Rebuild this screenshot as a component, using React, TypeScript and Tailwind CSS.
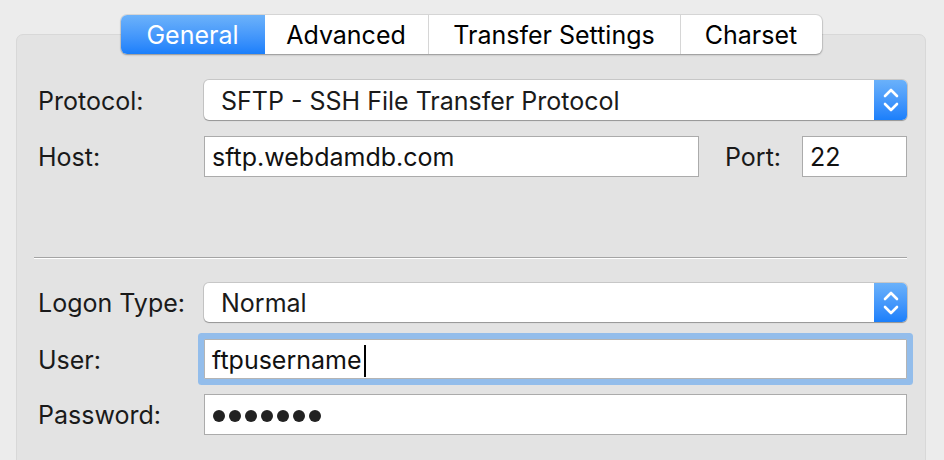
import React from "react";

const font = { fontFamily: "Inter, 'Liberation Sans', sans-serif" };

function Stepper() {
  return (
    <div className="flex h-full w-[33px] flex-col items-center justify-center rounded-r-[5px] bg-gradient-to-b from-[#6ab1fa] to-[#1a7ffb]">
      <svg width="20" height="28" viewBox="0 0 20 28" fill="none">
        <path d="M4 10 L10 4 L16 10" stroke="white" strokeWidth="2.6" strokeLinecap="round" strokeLinejoin="round" />
        <path d="M4 18 L10 24 L16 18" stroke="white" strokeWidth="2.6" strokeLinecap="round" strokeLinejoin="round" />
      </svg>
    </div>
  );
}

function Select({ value }: { value: string }) {
  return (
    <div className="flex h-full flex-1 items-stretch rounded-[5px] bg-white shadow-[0_0_0_1px_rgba(0,0,0,0.12),0_1px_1px_rgba(0,0,0,0.25)]">
      <div className="flex flex-1 items-center pl-[17px] pt-[3px] text-[25px] text-[#1a1a1a]">{value}</div>
      <Stepper />
    </div>
  );
}

function Label({ children }: { children: React.ReactNode }) {
  return <div className="w-[166px] shrink-0 pt-[3px] text-[25px] text-[#1a1a1a]">{children}</div>;
}

export default function App() {
  return (
    <div className="h-[460px] w-[944px] overflow-hidden bg-[#ececec]" style={font}>
      <div className="ml-[16px] w-[910px]">
        <div className="relative z-10 flex justify-center pt-[15px]">
          <div className="flex h-[39px] overflow-hidden rounded-[6px] bg-white text-[25px] shadow-[0_0_0_1px_rgba(0,0,0,0.08),0_1px_2px_rgba(0,0,0,0.3)]">
            <div className="flex w-[144px] items-center justify-center bg-gradient-to-b from-[#6cb2fa] to-[#1a7ffb] pt-[2px] text-white">General</div>
            <div className="flex w-[163px] items-center justify-center pt-[2px] text-black">Advanced</div>
            <div className="flex w-[252px] items-center justify-center border-l border-[#d6d6d6] pt-[2px] text-black">Transfer Settings</div>
            <div className="flex w-[142px] items-center justify-center border-l border-[#d6d6d6] pt-[2px] text-black">Charset</div>
          </div>
        </div>
        <div className="-mt-[20px] h-[460px] rounded-[7px] border border-[#d8d8d8] bg-[#e3e3e3] pl-[21px] pr-[18px] pt-[45px]">
          <div className="flex h-[40px] items-center">
            <Label>Protocol:</Label>
            <Select value="SFTP - SSH File Transfer Protocol" />
          </div>
          <div className="mt-[16px] flex h-[41px] items-center">
            <Label>Host:</Label>
            <div className="flex h-full w-[495px] items-center border border-[#ababab] bg-white pl-[7px] pt-[3px] text-[25px] text-[#111]">sftp.webdamdb.com</div>
            <div className="ml-[26px] w-[77px] pt-[3px] text-[25px] text-[#1a1a1a]">Port:</div>
            <div className="flex h-full flex-1 items-center border border-[#ababab] bg-white pl-[7px] pt-[3px] text-[25px] text-[#111]">22</div>
          </div>
          <div className="-ml-[4px] mt-[80px] h-[2px] border-t border-[#a4a4a4] bg-white" />
          <div className="mt-[24px] flex h-[39px] items-center">
            <Label>Logon Type:</Label>
            <Select value="Normal" />
          </div>
          <div className="mt-[17px] flex h-[40px] items-center">
            <Label>User:</Label>
            <div className="flex h-full flex-1 items-center rounded-[1px] border border-[#b4b4b4] bg-white pl-[7px] pt-[3px] text-[25px] text-[#111] shadow-[0_0_0_6px_#93bdeb]">
              ftpusername
              <span className="ml-[2px] inline-block h-[32px] w-[2px] bg-black" />
            </div>
          </div>
          <div className="mt-[15px] flex h-[41px] items-center">
            <Label>Password:</Label>
            <div className="flex h-full flex-1 items-center border border-[#ababab] bg-white pl-[8px] pt-[2px] text-[#222]">
              <div className="flex gap-[4px]">
                {Array.from({ length: 7 }).map((_, i) => (
                  <span key={i} className="inline-block h-[12px] w-[12px] rounded-full bg-[#222]" />
                ))}
              </div>
            </div>
          </div>
        </div>
      </div>
    </div>
  );
}
